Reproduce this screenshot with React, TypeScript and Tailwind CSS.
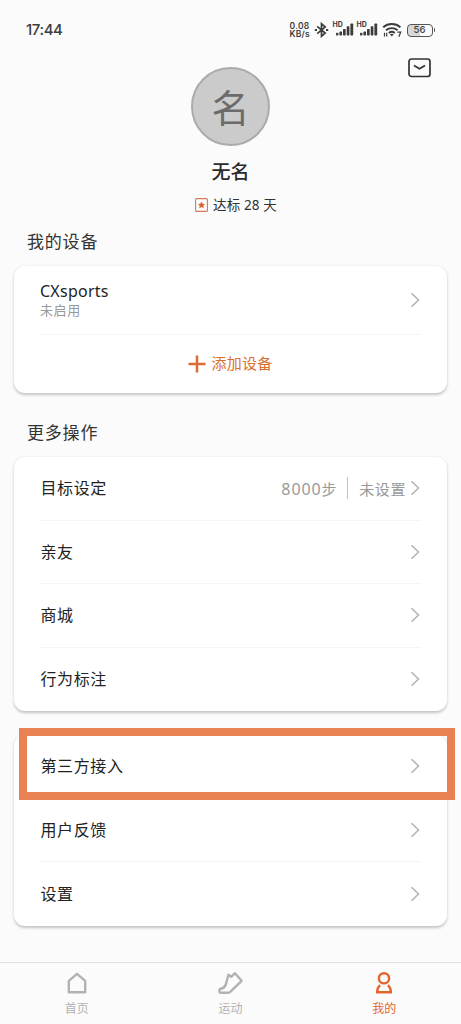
import React from 'react';

const Chevron = () => (
  <svg className="shrink-0" width="10" height="16" viewBox="0 0 10 16" fill="none" stroke="#b4b4b4" strokeWidth="1.6">
    <path d="M1.5 1.2 8.5 8l-7 6.8" />
  </svg>
);

const Signal = () => (
  <div className="relative h-4 w-5">
    <span className="absolute -top-px -left-px text-[7px] leading-[8px] font-bold font-['Inter',sans-serif]">HD</span>
    <svg className="absolute left-0 top-0" width="20" height="16" viewBox="0 0 20 16" fill="currentColor">
      <rect x="2" y="10.8" width="2.4" height="2.6" rx=".7" />
      <rect x="5.4" y="9.4" width="2.6" height="4" rx=".7" />
      <rect x="9" y="7" width="2.7" height="6.4" rx=".7" />
      <rect x="12.7" y="4.2" width="2.7" height="9.2" rx=".7" />
      <rect x="16.4" y="1.6" width="2.8" height="11.8" rx=".7" />
    </svg>
  </div>
);

const StatusBar = () => (
  <div className="flex h-[58px] items-start justify-between pl-[26px] pr-[26px] pt-[20px] text-[#3c3c3c]">
    <span className="text-[15px] leading-5 font-medium tracking-[-0.4px] font-['Inter',sans-serif]">17:44</span>
    <div className="flex items-center pt-[2px]">
      <div className="w-[24px] whitespace-nowrap text-[8.5px] leading-[8px] font-semibold font-['Inter',sans-serif]">
        <div className="tracking-[0.3px]">0.08</div>
        <div className="tracking-[0.2px]">KB/s</div>
      </div>
      <svg className="mr-[5px]" width="15" height="16" viewBox="0 0 15 16" fill="none" stroke="currentColor" strokeWidth="1.7">
        <path d="M3.2 4.3 11.2 11 7.5 14.3V1.7L11.2 5l-8 6.7" />
        <path d="M.8 8h2.2M12 8h2.2" strokeWidth="2" />
      </svg>
      <div className="flex gap-1">
        <Signal />
        <Signal />
      </div>
      <svg className="ml-[4px]" width="21" height="16" viewBox="0 0 21 16" fill="none" stroke="currentColor" strokeWidth="1.9">
        <path d="M1.2 5.2c4.8-4.3 12.4-4.3 17.2 0M4 8.2c3.3-2.8 8.3-2.8 11.6 0M6.8 11c1.8-1.4 4.2-1.4 6 0" />
        <path d="m9.8 14.4-1.9-2.1c1.1-.8 2.7-.8 3.8 0z" fill="currentColor" stroke="none" />
        <path d="M2.5 14.4v-3.6M4.7 10.8v3.6M15.4 10.2h3.3l-1.8 4.5" strokeWidth="1.2" />
      </svg>
      <div className="ml-[4px] flex items-center">
        <div className="flex h-[13px] w-[26px] items-center justify-center rounded-[4px] border border-[#555] bg-linear-to-r from-[#d8d8d8] from-50% to-[#fbfbfb] to-50% text-[9.5px] leading-none font-medium font-['Inter',sans-serif]">
          56
        </div>
        <div className="ml-px h-1 w-[1.5px] rounded-r bg-[#555]" />
      </div>
    </div>
  </div>
);

const Profile = () => (
  <div className="flex h-[163px] flex-col items-center">
    <div className="flex w-full items-start justify-center">
      <div className="ml-[53px] mt-[9px] flex flex-1 justify-center">
        <div className="flex size-[79px] items-center justify-center rounded-full border-2 border-[#ababab] bg-[#cbcbcb] text-[38px] leading-none text-[#6b6b6b]">
          名
        </div>
      </div>
      <svg className="mr-[30px]" width="23" height="20" viewBox="0 0 23 20" fill="none" stroke="#333" strokeWidth="1.7">
        <rect x="1" y="1" width="21" height="17.5" rx="2.5" />
        <path d="m6 7.5 5.5 3.3L17 7.5" />
      </svg>
    </div>
    <div className="mt-[12px] text-[19px] leading-7 font-medium text-[#2a2a2a]">无名</div>
    <div className="mt-[8px] ml-[11px] flex items-center gap-[5px] text-[13.5px] leading-[22px] tracking-[0.15px] text-[#333]">
      <svg width="13" height="14" viewBox="0 0 13 14" fill="none" stroke="#d9775a">
        <rect x=".6" y=".6" width="11.8" height="12.8" rx="1" strokeWidth="1.1" />
        <path d="m6.5 3.4 1.1 2.3 2.4.3-1.7 1.7.4 2.5-2.2-1.2-2.2 1.2.4-2.5L3 6l2.4-.3z" fill="#d9622f" stroke="none" />
      </svg>
      <span>达标 28 天</span>
    </div>
  </div>
);

const Card = ({ children, className = '' }: { children: React.ReactNode; className?: string }) => (
  <div className={`mx-[14px] rounded-[11px] bg-white px-[26px] shadow-[0_1.5px_3px_rgba(0,0,0,0.22)] ${className}`}>
    {children}
  </div>
);

const Row = ({ label, children }: { label: string; children?: React.ReactNode }) => (
  <div className="flex h-[63.5px] items-center justify-between border-b border-[#f5f5f5] pr-px text-[16px] tracking-[0.6px] text-[#222] last:border-b-0">
    <span className="pl-[0.5px]">{label}</span>
    <div className="flex items-center">
      {children}
      <Chevron />
    </div>
  </div>
);

const Tab = ({ label, active = false, children }: { label: string; active?: boolean; children: React.ReactNode }) => (
  <div className={`flex flex-1 flex-col items-center pt-[7px] ${active ? 'text-[#e2662c]' : 'text-[#b2b2b2]'}`}>
    {children}
    <span className="mt-[4px] text-[12px] leading-[18px]">{label}</span>
  </div>
);

export default function App() {
  return (
    <div className="flex h-[1024px] w-[461px] flex-col overflow-hidden bg-[#fbfbfb] font-['Noto_Sans','Noto_Sans_CJK_SC',sans-serif]">
      <StatusBar />
      <Profile />

      <h2 className="h-[45px] pl-[27px] pt-[7px] text-[17px] leading-7 tracking-[0.8px] text-[#333]">我的设备</h2>
      <Card className="h-[127px]">
        <div className="flex h-[68.5px] items-center justify-between border-b border-[#f5f5f5] pr-px">
          <div className="pt-px">
            <div className="text-[16px] leading-[20px] tracking-[0.25px] text-[#222]">CXsports</div>
            <div className="text-[13px] leading-[18px] tracking-[0.6px] text-[#999]">未启用</div>
          </div>
          <Chevron />
        </div>
        <div className="flex h-[58px] items-center justify-center gap-[5px] text-[15px] tracking-[0.3px] text-[#d9702f]">
          <svg width="18" height="18" viewBox="0 0 18 18" stroke="#de6c35" strokeWidth="2.5">
            <path d="M9 .5v17M.5 9h17" />
          </svg>
          添加设备
        </div>
      </Card>

      <h2 className="h-[64px] pl-[27px] pt-[26px] text-[17px] leading-7 tracking-[0.8px] text-[#333]">更多操作</h2>
      <Card>
        <Row label="目标设定">
          <span className="pt-px text-[15px] text-[#999]"><span className="text-[16px] tracking-[0.9px]">8000</span>步</span>
          <span className="mr-[11px] ml-[10px] h-[22px] w-px bg-[#c4c4c4]" />
          <span className="mr-1 pt-px text-[15px] text-[#999]">未设置</span>
        </Row>
        <Row label="亲友" />
        <Row label="商城" />
        <Row label="行为标注" />
      </Card>

      <div className="relative mt-[24px]">
        <Card>
          <Row label="第三方接入" />
          <Row label="用户反馈" />
          <Row label="设置" />
        </Card>
        <div className="absolute top-[-7px] right-[6px] left-[19px] h-[72px] border-8 border-[#e98253]" />
      </div>

      <nav className="mt-auto flex h-[62px] shrink-0 border-t border-[#dedede]">
        <Tab label="首页">
          <svg width="28" height="26" viewBox="0 0 28 26" fill="none" stroke="currentColor" strokeWidth="2.4" strokeLinejoin="round">
            <path d="M14 3.8 5.8 10.8v11.4h16.4V10.8z" />
          </svg>
        </Tab>
        <Tab label="运动">
          <svg width="28" height="26" viewBox="0 0 28 26" fill="none" stroke="currentColor" strokeWidth="2.4" strokeLinejoin="round">
            <path d="m11.4 4.8 2.8 2 3.8-3.6 6.6 7.6-10.6 10.4q-1.5 1.6-3.4 1.6H4.2q-1.9 0-1.9-1.7 0-2.2 1.6-2.4 3.6-.4 4.9-4.2Z" />
          </svg>
        </Tab>
        <Tab label="我的" active>
          <svg width="28" height="26" viewBox="0 0 28 26" fill="none" stroke="currentColor" strokeWidth="2.4">
            <circle cx="14" cy="8.3" r="5.1" />
            <path d="M10.2 15.2c-2 1.4-3 3.6-3 7h13.6c0-3.4-1-5.6-3-7" />
          </svg>
        </Tab>
      </nav>
    </div>
  );
}
